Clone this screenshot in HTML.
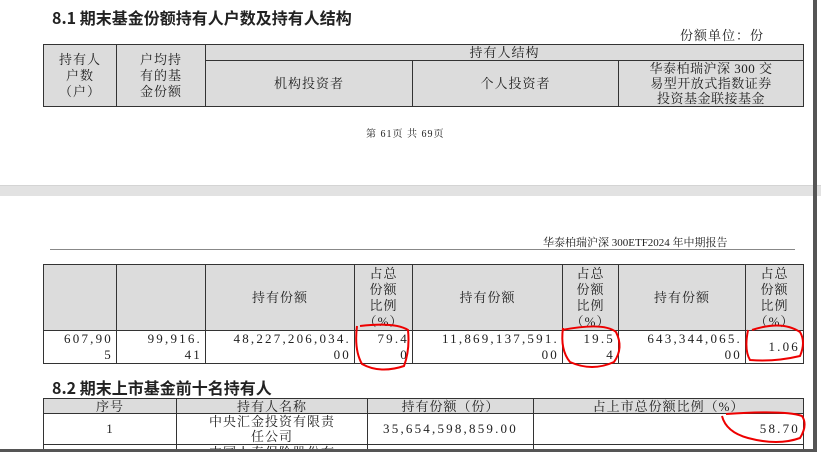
<!DOCTYPE html>
<html style="overflow:hidden"><head><meta charset="utf-8"><style>
html,body{margin:0;width:821px;height:454px;overflow:hidden}
body{background:#fff;position:relative;font-family:"Liberation Serif","Noto Serif CJK SC",serif;color:#222}
.a{position:absolute}
table{position:absolute;border-collapse:collapse;table-layout:fixed}
td{border:1.5px solid #333;font-size:13px;line-height:16px;text-align:center;padding:0 3px;letter-spacing:1px;overflow:hidden;white-space:nowrap}
.g td{background:#dcdcdc}
.r{text-align:right}
.n{letter-spacing:2.2px;font-size:13px}
</style></head><body>
<div class="a" style="left:52px;top:5px;font-size:16px;font-weight:bold;font-family:'Noto Sans CJK SC',sans-serif">8.1 期末基金份额持有人户数及持有人结构</div>
<div class="a" style="left:680px;top:25px;font-size:13px;letter-spacing:1px">份额单位：份</div>
<table style="left:43px;top:44px;width:760px;height:61px">
<col style="width:73px"><col style="width:89px"><col style="width:207px"><col style="width:206px"><col style="width:185px">
<tr class="g" style="height:16px"><td rowspan="2">持有人<br>户数<br>（户）</td><td rowspan="2">户均持<br>有的基<br>金份额</td><td colspan="3" style="line-height:14px">持有人结构</td></tr>
<tr class="g"><td>机构投资者</td><td>个人投资者</td><td style="line-height:15px;letter-spacing:0.5px">华泰柏瑞沪深 300 交<br>易型开放式指数证券<br>投资基金联接基金</td></tr>
</table>
<div class="a" style="left:366px;top:125px;font-size:10px;letter-spacing:1px">第 61页 共 69页</div>
<div class="a" style="left:0;top:185px;width:821px;height:10px;background:#e2e2e2;border-top:1px solid #d4d4d4"></div>
<div class="a" style="left:543px;top:234px;font-size:11px">华泰柏瑞沪深 300ETF2024 年中期报告</div>
<div class="a" style="left:50px;top:249px;width:745px;height:1px;background:#888"></div>
<table style="left:43px;top:264px;width:760px;height:96px">
<col style="width:73px"><col style="width:89px"><col style="width:149px"><col style="width:58px"><col style="width:150px"><col style="width:56px"><col style="width:127px"><col style="width:58px">
<tr class="g" style="height:66px"><td></td><td></td><td>持有份额</td><td>占总<br>份额<br>比例<br>（%）</td><td>持有份额</td><td>占总<br>份额<br>比例<br>（%）</td><td>持有份额</td><td>占总<br>份额<br>比例<br>（%）</td></tr>
<tr><td class="r n">607,90<br>5</td><td class="r n">99,916.<br>41</td><td class="r n">48,227,206,034.<br>00</td><td class="r n">79.4<br>0</td><td class="r n">11,869,137,591.<br>00</td><td class="r n">19.5<br>4</td><td class="r n">643,344,065.<br>00</td><td class="r n">1.06</td></tr>
</table>
<div class="a" style="left:52px;top:377px;font-size:16px;font-weight:bold;font-family:'Noto Sans CJK SC',sans-serif;line-height:20px">8.2 期末上市基金前十名持有人</div>
<table style="left:43px;top:398px;width:760px;height:70px">
<col style="width:133px"><col style="width:191px"><col style="width:166px"><col style="width:270px">
<tr class="g" style="height:15px"><td style="line-height:13px">序号</td><td style="line-height:13px">持有人名称</td><td style="line-height:13px">持有份额（份）</td><td style="line-height:13px">占上市总份额比例（%）</td></tr>
<tr style="height:31px"><td>1</td><td style="line-height:15px">中央汇金投资有限责<br>任公司</td><td class="n">35,654,598,859.00</td><td class="r n">58.70</td></tr>
<tr><td></td><td style="vertical-align:top">中国人寿保险股份有</td><td></td><td></td></tr>
</table>
<div class="a" style="left:813px;top:0;width:4px;height:454px;background:#555"></div>
<div class="a" style="left:0;top:449px;width:817px;height:3px;background:#555"></div>
<div class="a" style="left:0;top:452px;width:821px;height:2px;background:#fff"></div>
<svg class="a" style="left:0;top:0" width="821" height="454" fill="none" stroke="#e00" stroke-width="2">
<path d="M357 326 Q354 350 362 364 Q380 374 404 366 Q410 350 408 330 Q395 322 360 326"/>
<path d="M563 328 Q560 350 570 362 Q592 372 614 362 Q624 348 616 332 Q604 322 562 330"/>
<path d="M748 330 Q744 350 750 360 Q775 362 800 356 Q806 342 800 332 Q782 320 752 330"/>
<path d="M722 416 Q726 432 748 438 Q778 446 800 438 Q808 425 802 416 Q785 410 726 414"/>
</svg>
</body></html>
